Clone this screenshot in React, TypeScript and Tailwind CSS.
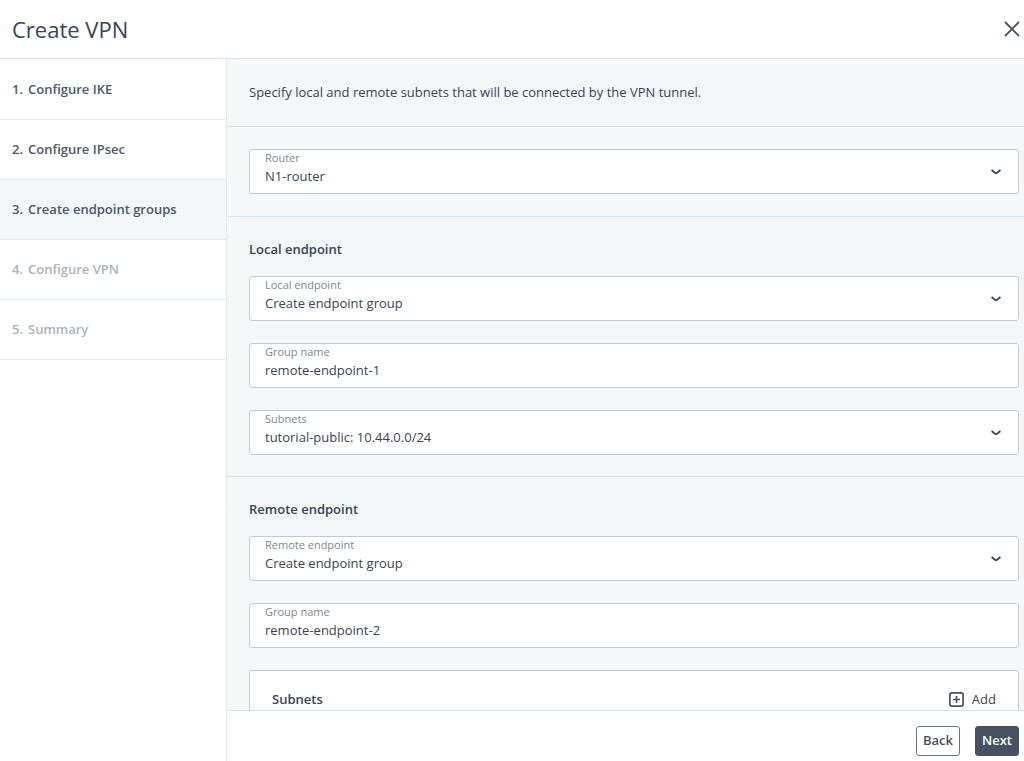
import { useId, useState, type ReactNode } from "react";

const steps = [
  "Configure IKE",
  "Configure IPsec",
  "Create endpoint groups",
  "Configure VPN",
  "Summary",
];
const currentStep = 2;

function FieldFrame({ id, label, children }: { id: string; label: string; children: ReactNode }) {
  return (
    <div className="flex h-[45px] flex-col rounded-[3px] border border-[#c6cad0] bg-white">
      <label htmlFor={id} className="px-[15px] text-[11px] leading-4 text-[#7d8793]">
        {label}
      </label>
      {children}
    </div>
  );
}

function SelectField({ label, options }: { label: string; options: string[] }) {
  const id = useId();
  return (
    <FieldFrame id={id} label={label}>
      <div className="grid items-start">
        <select
          id={id}
          className="col-start-1 row-start-1 h-5 w-full appearance-none bg-transparent px-[15px] text-[13px] leading-5 text-[#384454]"
        >
          {options.map((option) => (
            <option key={option}>{option}</option>
          ))}
        </select>
        <svg
          aria-hidden="true"
          viewBox="0 0 10 6"
          className="pointer-events-none col-start-1 row-start-1 mt-[3px] mr-[17px] h-[6px] w-[10px] justify-self-end"
          fill="none"
          stroke="#3d4a59"
          strokeWidth="1.9"
        >
          <path d="M0.6 1 Q4.2 4.2 5 4.2 Q5.8 4.2 9.4 1" />
        </svg>
      </div>
    </FieldFrame>
  );
}

function TextField({ label, initial }: { label: string; initial: string }) {
  const id = useId();
  const [value, setValue] = useState(initial);
  return (
    <FieldFrame id={id} label={label}>
      <input
        id={id}
        type="text"
        value={value}
        onChange={(event) => setValue(event.target.value)}
        className="h-5 w-full bg-transparent px-[15px] text-[13px] leading-5 text-[#384454]"
      />
    </FieldFrame>
  );
}

function Section({ title, children }: { title: string; children: ReactNode }) {
  return (
    <section className="border-b border-[#d5e2f0] pt-[22px] pr-[5px] pb-[21px] pl-[22px]">
      <h2 className="mb-[17px] leading-5 font-semibold">{title}</h2>
      <div className="flex flex-col gap-[22px]">{children}</div>
    </section>
  );
}

export default function App() {
  return (
    <div className="flex h-screen flex-col bg-white font-['Open_Sans','Noto_Sans',sans-serif] text-[13px] text-[#384454]">
      <header className="flex h-[59px] shrink-0 items-center justify-between border-b border-[#dbe4f2] pr-1 pl-3">
        <h1 className="text-[22px] leading-8">Create VPN</h1>
        <button type="button" aria-label="Close">
          <svg viewBox="0 0 16 16" className="size-4" fill="none" stroke="#465260" strokeWidth="1.8">
            <path d="M1 1 L15 15 M15 1 L1 15" />
          </svg>
        </button>
      </header>
      <div className="flex min-h-0 flex-1">
        <nav className="w-[227px] shrink-0 border-r border-[#dce8f5] pt-px">
          <ol>
            {steps.map((step, index) => (
              <li key={step} className="border-b border-[#e0e8f2]">
                <button
                  type="button"
                  disabled={index > currentStep}
                  aria-current={index === currentStep ? "step" : undefined}
                  className="flex h-[59px] w-full items-center gap-[5px] pl-3 text-left font-semibold text-[#4d5866] disabled:text-[#adb3ba] aria-[current=step]:bg-[#f4f6f8]"
                >
                  <span>{index + 1}.</span>
                  <span>{step}</span>
                </button>
              </li>
            ))}
          </ol>
        </nav>
        <main className="flex min-w-0 flex-1 flex-col">
          <div className="min-h-0 flex-1 overflow-y-auto bg-[#f4f6f8] [scrollbar-width:none]">
            <p className="border-b border-[#d5e2f0] py-[22px] pr-[5px] pl-[22px] leading-[23px]">
              Specify local and remote subnets that will be connected by the VPN tunnel.
            </p>
            <div className="border-b border-[#d5e2f0] py-[22px] pr-[5px] pl-[22px]">
              <SelectField label="Router" options={["N1-router"]} />
            </div>
            <Section title="Local endpoint">
              <SelectField label="Local endpoint" options={["Create endpoint group"]} />
              <TextField label="Group name" initial="remote-endpoint-1" />
              <SelectField label="Subnets" options={["tutorial-public: 10.44.0.0/24"]} />
            </Section>
            <Section title="Remote endpoint">
              <SelectField label="Remote endpoint" options={["Create endpoint group"]} />
              <TextField label="Group name" initial="remote-endpoint-2" />
              <div className="flex items-center justify-between rounded-[3px] border border-[#c6cad0] bg-white px-[22px] py-[18px]">
                <h3 className="leading-5 font-semibold">Subnets</h3>
                <button type="button" className="flex items-center gap-2 leading-5 font-medium">
                  <svg viewBox="0 0 15 15" className="size-[15px]" fill="none" stroke="#465260" strokeWidth="1.7">
                    <rect x="0.9" y="0.9" width="13.2" height="13.2" rx="2" />
                    <path d="M7.5 4 V11 M4 7.5 H11" />
                  </svg>
                  Add
                </button>
              </div>
            </Section>
          </div>
          <footer className="flex shrink-0 justify-end gap-[15px] border-t border-[#d5e2f0] pt-[15px] pr-[5px] pb-[5px]">
            <button
              type="button"
              className="h-[30px] rounded-[3px] border border-[#6b7683] px-[6px] font-semibold text-[#465260]"
            >
              Back
            </button>
            <button
              type="button"
              className="h-[30px] rounded-[3px] border border-[#465260] bg-[#465260] px-[6px] font-semibold text-white"
            >
              Next
            </button>
          </footer>
        </main>
      </div>
    </div>
  );
}
